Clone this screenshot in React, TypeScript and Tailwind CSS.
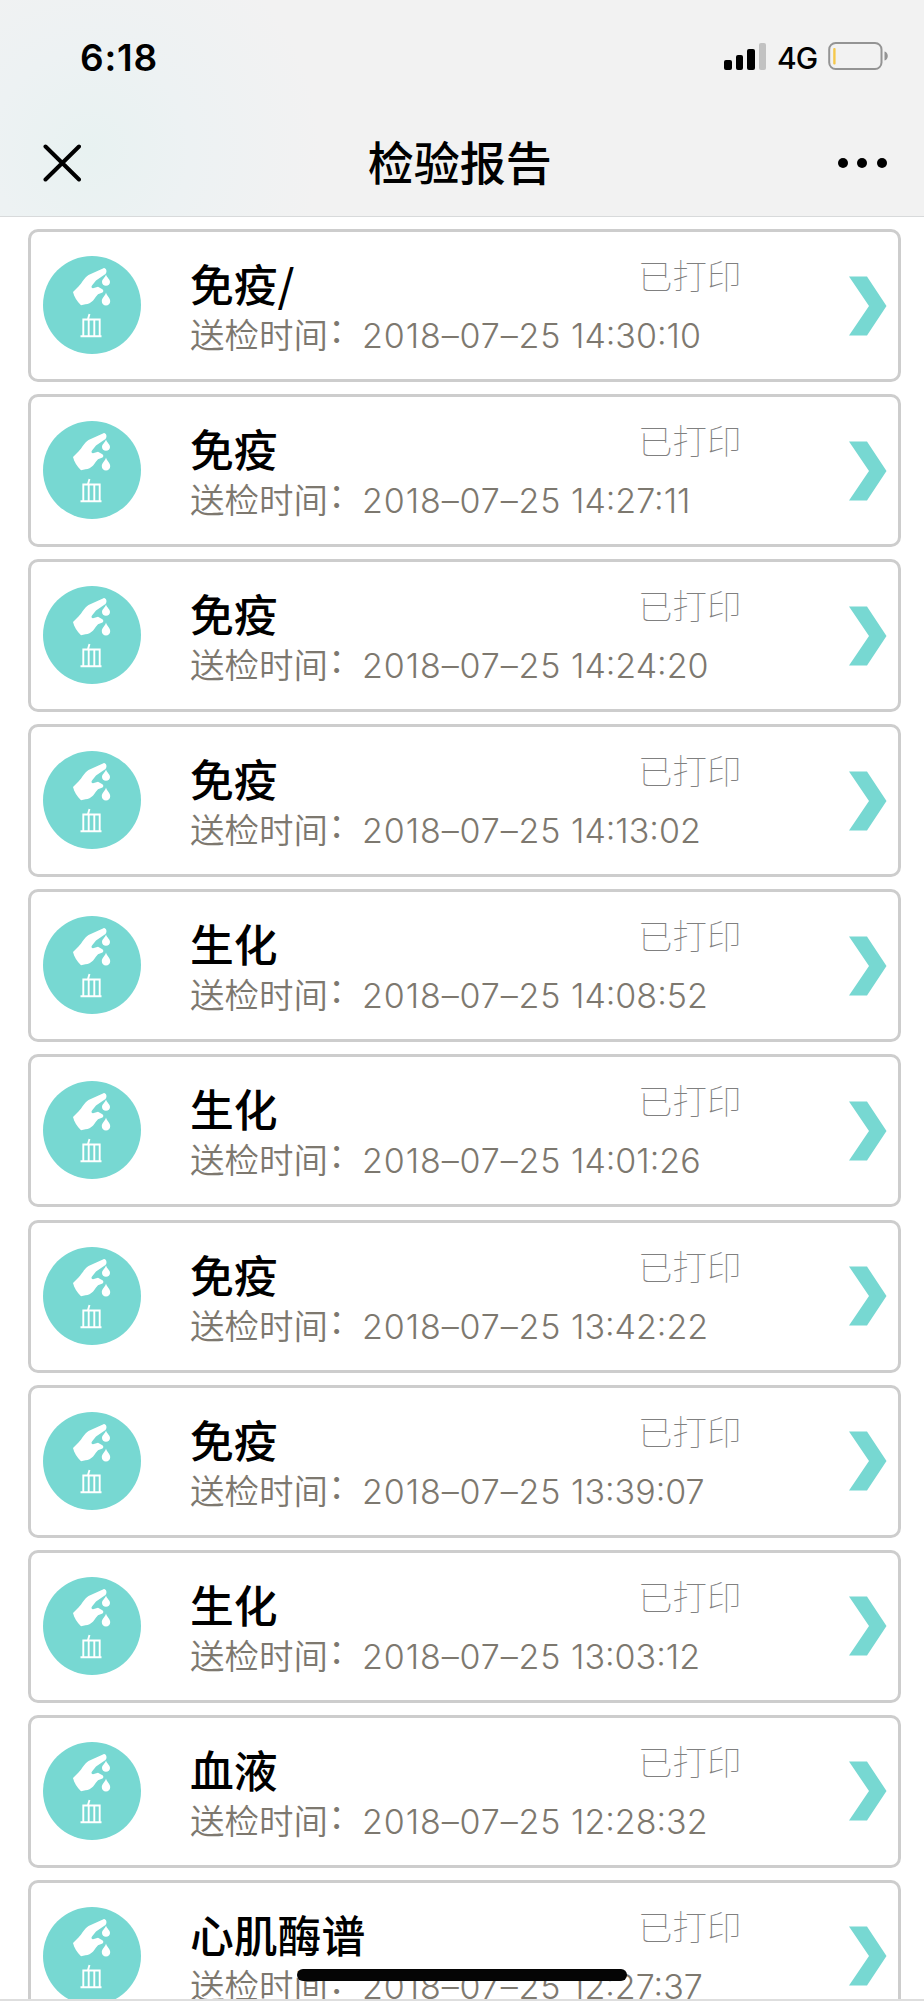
type Report = {
  name: string
  date: string
  time: string
}

const reports: Report[] = [
  { name: "免疫/", date: "2018–07–25", time: "14:30:10" },
  { name: "免疫", date: "2018–07–25", time: "14:27:11" },
  { name: "免疫", date: "2018–07–25", time: "14:24:20" },
  { name: "免疫", date: "2018–07–25", time: "14:13:02" },
  { name: "生化", date: "2018–07–25", time: "14:08:52" },
  { name: "生化", date: "2018–07–25", time: "14:01:26" },
  { name: "免疫", date: "2018–07–25", time: "13:42:22" },
  { name: "免疫", date: "2018–07–25", time: "13:39:07" },
  { name: "生化", date: "2018–07–25", time: "13:03:12" },
  { name: "血液", date: "2018–07–25", time: "12:28:32" },
  { name: "心肌酶谱", date: "2018–07–25", time: "12:27:37" },
]

function StatusBar() {
  return (
    <div className="flex h-[112px] items-center justify-between pr-[35px] pl-[80px]">
      <span className="mt-[2px] font-['Inter',sans-serif] text-[37px] leading-none font-semibold tracking-[0.8px]">
        6:18
      </span>
      <div className="flex items-center">
        {/* Signal */}
        <div className="flex h-[27px] items-end gap-[4px]">
          <div className="h-[10px] w-[7.5px] rounded-[2px] bg-black" />
          <div className="h-[15px] w-[7.5px] rounded-[2px] bg-black" />
          <div className="h-[21px] w-[7.5px] rounded-[2px] bg-black" />
          <div className="h-[27px] w-[7.5px] rounded-[2px] bg-[#c2c2c2]" />
        </div>
        <span className="mt-[3px] ml-[11px] w-[51px] font-['Inter',sans-serif] text-[30px] leading-none font-medium tracking-[-0.9px]">
          4G
        </span>
        {/* Battery */}
        <svg className="h-[28px] w-[61px]" viewBox="0 0 61 28" fill="none">
          <rect x="1.2" y="1" width="52.3" height="26" rx="6.5" stroke="#949494" strokeWidth="2" />
          <rect x="5.2" y="6" width="2.4" height="16.5" rx="1" fill="#f5c84c" />
          <path d="M56.5 9.5c2 .5 3.3 2.300 3.300 4.500s-1.300 4-3.300 4.500z" fill="#949494" />
        </svg>
      </div>
    </div>
  )
}

function NavBar() {
  return (
    <div className="flex flex-1 items-center justify-between pr-[37px] pb-[2px] pl-[43px]">
      <svg className="h-[38px] w-[38px]" viewBox="0 0 38 38" fill="none">
        <path d="M2.500 2.500L36 35.500M36 2.500L2.500 35.500" stroke="#000" strokeWidth="4" strokeLinecap="round" />
      </svg>
      <h1 className="-mt-[7px] pl-px font-['Noto_Sans_CJK_SC',sans-serif] text-[46px] leading-none font-medium">
        检验报告
      </h1>
      <div className="flex gap-[9.700px]">
        <div className="size-[10px] rounded-full bg-black" />
        <div className="size-[10px] rounded-full bg-black" />
        <div className="size-[10px] rounded-full bg-black" />
      </div>
    </div>
  )
}

function BloodIcon() {
  return (
    <svg className="mt-[24px] size-[98px] shrink-0" viewBox="0 0 98 98" fill="none">
      <circle cx="49" cy="49" r="49" fill="#77d8d2" />
      {/* Hand */}
      <path
        d="M60.500 12.200L45.500 19C41 22 39 27 35.500 30.500L30 36c1 4.500 4.200 9.500 8 13.200 3-1 6-.7 8.500-2 4.500-2.200 5.500-6 8.500-9l4.500-1.700c1.500-1 1-3.200-1-3.800L55 30.800l-5 1.500c-1.500-.2-2-1.500-1-2.800l4-5 9.500-6.500c2.200-2.200.5-6.500-2-5.800z"
        fill="#fff"
      />
      {/* Drops */}
      <path d="M63 18.500c-1 3.500-4 4.500-4 7.500 0 2.300 1.700 3.700 4 3.700s4-1.400 4-3.700c0-3-3-4-4-7.500z" fill="#fff" />
      <path d="M63 36.500c-1 4-4.200 5.300-4.200 8.700 0 2.500 1.800 4.200 4.200 4.200s4.200-1.700 4.200-4.200c0-3.400-3.200-4.700-4.200-8.700z" fill="#fff" />
      {/* Vessel */}
      <path d="M46.500 58l-1.500 5M40.300 80V63.500h16.400V80M45.700 64v16M51.300 64v16M37.500 80.300h21" stroke="#fff" strokeWidth="1.900" />
    </svg>
  )
}

function ReportCard({ report }: { report: Report }) {
  return (
    <div className="flex h-[153px] shrink-0 rounded-[10px] border-[3px] border-[#cdcdcd] bg-white pr-[11px] pl-[12px]">
      <BloodIcon />
      <div className="ml-[49px] flex flex-1 flex-col pt-[26px]">
        <div className="flex h-[50px]">
          <h2 className="w-[448px] font-['Noto_Sans_CJK_SC',sans-serif] text-[43.800px] leading-[50px] font-medium">
            {report.name}
          </h2>
          <span className="-mt-[9px] font-['Noto_Sans_CJK_SC',sans-serif] text-[34.500px] leading-[50px] font-thin text-[#808080]">
            已打印
          </span>
        </div>
        <div className="flex h-[50px] whitespace-nowrap text-[#7d786f]">
          <span className="w-[172px] font-['Noto_Sans_CJK_SC',sans-serif] text-[34.500px] leading-[50px] font-[350]">
            送检时间<span className="relative -top-[5px]">：</span>
          </span>
          <span className="font-['Inter',sans-serif] text-[34px] leading-[55px] font-[350]">
            <span className="tracking-[0.900px]">{report.date}</span> {report.time}
          </span>
        </div>
      </div>
      <svg className="mt-[43.500px] h-[60px] w-[38px] shrink-0" viewBox="0 0 38 60">
        <path d="M0 .5h18L37.500 30 18 59.500H0L20 30z" fill="#77d8d2" />
      </svg>
    </div>
  )
}

export default function App() {
  return (
    <div className="relative flex h-[2001px] w-[924px] flex-col overflow-hidden bg-white text-black">
      <header className="flex h-[217px] shrink-0 flex-col border-b border-[#d8dadb] bg-[#f2f2f2] bg-[radial-gradient(circle_at_90px_150px,#e8f2f1_0,#edf2f3_100px,#f2f2f2_230px)]">
        <StatusBar />
        <NavBar />
      </header>
      <main className="flex flex-col gap-[12.100px] pt-[12px] pr-[23px] pl-[28px]">
        {reports.map((report) => (
          <ReportCard key={report.time} report={report} />
        ))}
      </main>
      {/* Toolbar edge and home indicator over the list */}
      <div className="absolute inset-x-0 bottom-0 h-[2px] bg-[#dedede]" />
      <div className="absolute bottom-[20px] left-[297px] h-[12px] w-[330px] rounded-full bg-[#050505]" />
    </div>
  )
}
